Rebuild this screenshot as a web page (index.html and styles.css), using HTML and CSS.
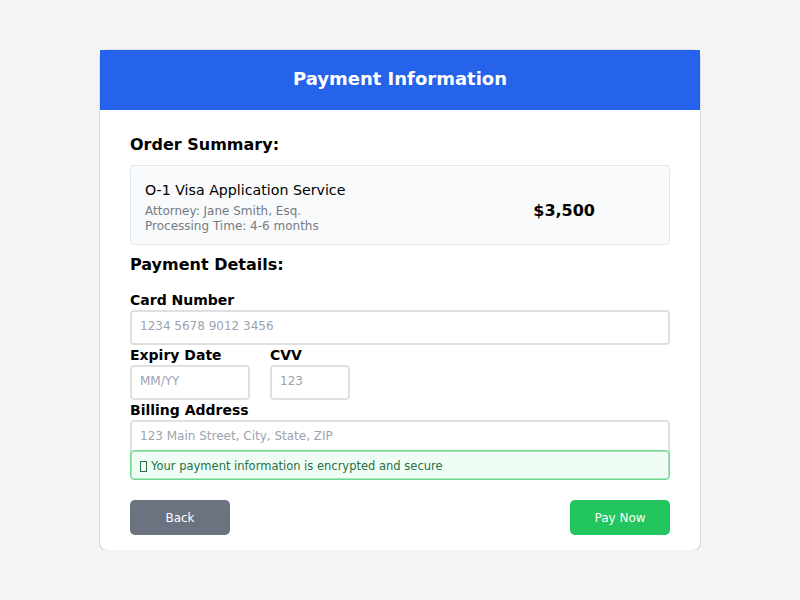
FILE: index.html
```html
<!DOCTYPE html>
<html lang="en">
<head>
<meta charset="utf-8">
<title>Payment Information</title>
<link rel="stylesheet" href="styles.css">
</head>
<body>
<div class="card">
  <div class="card-header">Payment Information</div>
  <div class="card-body">
    <h2 class="section-title">Order Summary:</h2>
    <div class="summary">
      <div class="summary-info">
        <div class="summary-title">O-1 Visa Application Service</div>
        <div class="summary-meta">Attorney: Jane Smith, Esq.</div>
        <div class="summary-meta">Processing Time: 4-6 months</div>
      </div>
      <div class="summary-price">$3,500</div>
    </div>
    <h2 class="section-title details-title">Payment Details:</h2>
    <label class="field-label">Card Number</label>
    <input class="field-input" type="text" placeholder="1234 5678 9012 3456">
    <div class="field-row">
      <div class="field-group expiry">
        <label class="field-label">Expiry Date</label>
        <input class="field-input" type="text" placeholder="MM/YY">
      </div>
      <div class="field-group cvv">
        <label class="field-label">CVV</label>
        <input class="field-input" type="text" placeholder="123">
      </div>
    </div>
    <label class="field-label">Billing Address</label>
    <input class="field-input" type="text" placeholder="123 Main Street, City, State, ZIP">
    <div class="secure-note"><span class="tofu"></span>Your payment information is encrypted and secure</div>
    <div class="actions">
      <button class="btn btn-back">Back</button>
      <button class="btn btn-pay">Pay Now</button>
    </div>
  </div>
</div>
</body>
</html>
```
FILE: styles.css
```css
html, body {
  margin: 0;
  padding: 0;
}
body {
  background: #f4f4f4;
  font-family: "DejaVu Sans", sans-serif;
  color: #000;
}
.card {
  box-sizing: border-box;
  width: 600px;
  height: 500px;
  margin: 50px auto 0;
  background: #fff;
  border-radius: 8px;
  box-shadow: 0 0 0 1px #dedede, 0 1px 0 1px #dcdcdc;
}
.card-header {
  box-sizing: border-box;
  height: 60px;
  padding-bottom: 4px;
  background: #2563eb;
  color: #fff;
  font-size: 18px;
  font-weight: bold;
  display: flex;
  align-items: center;
  justify-content: center;
}
.card-body {
  padding: 25px 30px 15px;
}
.section-title {
  margin: 0 0 10px;
  font-size: 16px;
  line-height: 20px;
  font-weight: bold;
}
.details-title {
  margin: 10px 0 15px;
}
.summary {
  display: flex;
  justify-content: space-between;
  align-items: center;
  background: #f8fafc;
  border: 1px solid #e2e8f0;
  border-radius: 4px;
  padding: 16px 14px 10px;
}
.summary-title {
  font-size: 14.2px;
  line-height: 17px;
  margin-bottom: 5px;
}
.summary-meta {
  font-size: 12px;
  line-height: 15px;
  color: #777b84;
}
.summary-price {
  font-size: 16px;
  font-weight: bold;
  margin-right: 60px;
  margin-top: 4px;
}
.field-label {
  display: block;
  font-size: 14px;
  font-weight: bold;
  line-height: 20px;
}
.field-input {
  display: block;
  box-sizing: border-box;
  width: 100%;
  height: 35px;
  margin: 0;
  padding: 0 8px 3px;
  border: 2px solid #e0e0e0;
  border-radius: 4px;
  font-family: "DejaVu Sans", sans-serif;
  font-size: 12px;
  background: #fff;
}
.field-input::placeholder {
  color: #9ca3af;
}
.field-row {
  display: flex;
  gap: 20px;
}
.expiry { width: 120px; }
.cvv { width: 80px; }
.secure-note {
  position: relative;
  box-sizing: border-box;
  height: 30px;
  margin-top: -5px;
  padding: 2px 9px 0;
  display: flex;
  align-items: center;
  background: #f0fdf4;
  border: 1px solid #6fd690;
  box-shadow: inset 0 0 0 1px #a6e9bb;
  border-radius: 4px;
  color: #1f7045;
  font-size: 11.5px;
}
.tofu {
  display: inline-block;
  width: 5px;
  height: 9px;
  border: 1px solid #2f6a4a;
  margin-right: 4px;
}
.actions {
  display: flex;
  justify-content: space-between;
  margin-top: 20px;
}
.btn {
  width: 100px;
  height: 35px;
  border: none;
  border-radius: 5px;
  color: #fff;
  font-family: "DejaVu Sans", sans-serif;
  font-size: 12px;
}
.btn-back { background: #6b7280; }
.btn-pay { background: #22c55e; }
```
